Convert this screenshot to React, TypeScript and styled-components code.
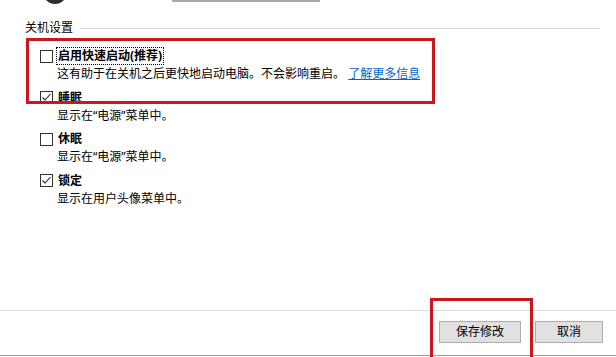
import React from "react";
import styled, { createGlobalStyle } from "styled-components";

const Global = createGlobalStyle`
  html, body { margin: 0; padding: 0; background: #fff; }
  body { font-family: "Segoe UI", "Noto Sans", "Noto Sans CJK SC", sans-serif; font-size: 12px; color: #000; }
  * { box-sizing: border-box; }
`;

const Page = styled.div`
  position: relative;
  width: 616px;
  height: 357px;
  overflow: hidden;
  display: flex;
  flex-direction: column;
  background: #fff;
`;

const Content = styled.div`
  flex: 1;
  display: flex;
  flex-direction: column;
`;

const TopStrip = styled.div`
  height: 6px;
  display: flex;
  align-items: flex-start;
  padding-left: 43px;
  overflow: hidden;
`;

const IconArc = styled.div`
  width: 24px;
  height: 24px;
  margin-top: -20px;
  border-radius: 50%;
  background: #2f2f2f;
  flex-shrink: 0;
`;

const FieldEdge = styled.div`
  width: 148px;
  height: 2px;
  margin-left: 105px;
  background: #a8a8a8;
`;

const GroupHeader = styled.div`
  margin-top: 14px;
  height: 16px;
  display: flex;
  align-items: center;
  padding-left: 25px;
  padding-right: 16px;
  gap: 7px;
`;

const GroupLabel = styled.span`
  line-height: 16px;
  white-space: nowrap;
`;

const GroupRule = styled.div`
  flex: 1;
  height: 1px;
  background: #dadada;
`;

const OptionList = styled.div`
  margin-top: 11px;
  padding-left: 40px;
  display: flex;
  flex-direction: column;
  gap: 5.5px;
`;

const Option = styled.div`
  display: flex;
  flex-direction: column;
`;

const OptionRow = styled.div`
  height: 18px;
  display: flex;
  align-items: center;
  gap: 4px;
`;

const Box = styled.span`
  width: 13px;
  height: 13px;
  border: 1px solid #333;
  background: #fff;
  display: inline-flex;
  align-items: center;
  justify-content: center;
  flex-shrink: 0;
`;

const OptionLabel = styled.span<{ $focused?: boolean }>`
  font-weight: bold;
  line-height: 16px;
  padding: 0 1px;
  margin-left: -1px;
  border: 1px dotted ${(p) => (p.$focused ? "#000" : "transparent")};
  white-space: nowrap;
`;

const Desc = styled.div`
  height: 18px;
  line-height: 18px;
  padding-left: 17px;
  white-space: nowrap;
`;

const Link = styled.a`
  color: #0066cc;
  text-decoration: underline;
  cursor: pointer;
`;

const Footer = styled.div`
  height: 47px;
  border-top: 1px solid #dcdcdc;
  display: flex;
  flex-direction: column;
`;

const ButtonRow = styled.div`
  display: flex;
  justify-content: flex-end;
  gap: 14px;
  padding-top: 10px;
  padding-right: 13px;
`;

const Button = styled.button<{ $w: number }>`
  width: ${(p) => p.$w}px;
  height: 22px;
  border: 1px solid #adadad;
  background: #e1e1e1;
  font-family: inherit;
  font-size: 12px;
  color: #000;
  padding: 0;
  line-height: 20px;
`;

const BottomRule = styled.div`
  margin-top: 12px;
  height: 1px;
  background: #9d9d9d;
`;

const Annotation = styled.div<{ $l: number; $t: number; $w: number; $h: number }>`
  position: absolute;
  left: ${(p) => p.$l}px;
  top: ${(p) => p.$t}px;
  width: ${(p) => p.$w}px;
  height: ${(p) => p.$h}px;
  border: 3px solid #c8171e;
  pointer-events: none;
`;

const Check = () => (
  <svg width="11" height="11" viewBox="0 0 11 11">
    <path d="M1.5 5.5 L4 8 L9.5 2" fill="none" stroke="#222" strokeWidth="1.1" />
  </svg>
);

type Item = { label: string; checked: boolean; desc: React.ReactNode; focused?: boolean };

const items: Item[] = [
  {
    label: "启用快速启动(推荐)",
    checked: false,
    focused: true,
    desc: (
      <>
        这有助于在关机之后更快地启动电脑。不会影响重启。 <Link>了解更多信息</Link>
      </>
    ),
  },
  { label: "睡眠", checked: true, desc: "显示在“电源”菜单中。" },
  { label: "休眠", checked: false, desc: "显示在“电源”菜单中。" },
  { label: "锁定", checked: true, desc: "显示在用户头像菜单中。" },
];

export default function App() {
  return (
    <>
      <Global />
      <Page>
        <Content>
          <TopStrip>
            <IconArc />
            <FieldEdge />
          </TopStrip>
          <GroupHeader>
            <GroupLabel>关机设置</GroupLabel>
            <GroupRule />
          </GroupHeader>
          <OptionList>
            {items.map((it) => (
              <Option key={it.label}>
                <OptionRow>
                  <Box>{it.checked && <Check />}</Box>
                  <OptionLabel $focused={it.focused}>{it.label}</OptionLabel>
                </OptionRow>
                <Desc>{it.desc}</Desc>
              </Option>
            ))}
          </OptionList>
        </Content>
        <Footer>
          <ButtonRow>
            <Button $w={82}>保存修改</Button>
            <Button $w={68}>取消</Button>
          </ButtonRow>
          <BottomRule />
        </Footer>
        <Annotation $l={26} $t={38} $w={409} $h={66} />
        <Annotation $l={430} $t={298} $w={103} $h={70} />
      </Page>
    </>
  );
}
